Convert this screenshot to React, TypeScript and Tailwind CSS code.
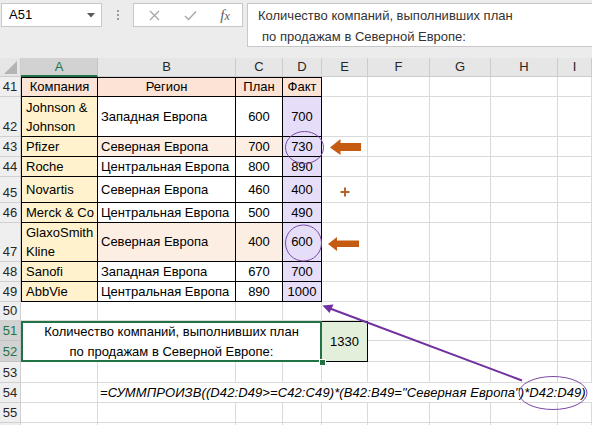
import React from "react";

const G = "border-r border-b border-[#dadada]";
const T = "border-r border-b border-black";

function RH({ n, sel }: { n?: number; sel?: boolean }) {
  return (
    <div
      className={
        sel
          ? "flex items-end justify-center bg-[#d2d2d2] text-[#217346] border-r border-b border-[#c4c4c4] leading-[19px]"
          : "flex items-end justify-center bg-[#efefef] text-[#262626] border-r border-b border-[#d0d0d0] leading-[19px]"
      }
    >
      {n}
    </div>
  );
}

function Empties({ count }: { count: number }) {
  return (
    <>
      {Array.from({ length: count }).map((_, i) => (
        <div key={i} className={G} />
      ))}
    </>
  );
}

type Row = {
  n: number;
  company: string;
  region: string;
  plan: number;
  fact: number;
  hl?: boolean;
  wrap?: boolean;
};

const rows: Row[] = [
  { n: 42, company: "Johnson & Johnson", region: "Западная Европа", plan: 600, fact: 700, wrap: true },
  { n: 43, company: "Pfizer", region: "Северная Европа", plan: 700, fact: 730, hl: true },
  { n: 44, company: "Roche", region: "Центральная Европа", plan: 800, fact: 890 },
  { n: 45, company: "Novartis", region: "Северная Европа", plan: 460, fact: 400 },
  { n: 46, company: "Merck & Co", region: "Центральная Европа", plan: 500, fact: 490 },
  { n: 47, company: "GlaxoSmith Kline", region: "Северная Европа", plan: 400, fact: 600, hl: true, wrap: true },
  { n: 48, company: "Sanofi", region: "Западная Европа", plan: 670, fact: 700 },
  { n: 49, company: "AbbVie", region: "Центральная Европа", plan: 890, fact: 1000 },
];

function ColHeader({ label, sel }: { label: string; sel?: boolean }) {
  return (
    <div
      className={
        sel
          ? "flex items-center justify-center bg-[#d2d2d2] text-[#217346] border-r border-[#c4c4c4] border-b-2 border-b-[#217346]"
          : "flex items-center justify-center bg-[#e6e6e6] text-[#262626] border-r border-b border-[#cccccc]"
      }
    >
      {label}
    </div>
  );
}

export default function App() {
  return (
    <div
      className="relative w-[592px] h-[425px] overflow-hidden bg-white text-[13px] text-black"
      style={{ fontFamily: '"Liberation Sans", Arial, sans-serif' }}
    >
      {/* Formula bar */}
      <div className="h-[58px] bg-[#ececec] pt-[3px] flex items-start">
        <div className="ml-px w-[101px] h-[24px] bg-white border border-[#c8c8c8] flex items-center pl-[7px] pr-[6px] justify-between">
          <span>A51</span>
          <svg width="8" height="5" viewBox="0 0 8 5">
            <path d="M0 0 L8 0 L4 4.5 Z" fill="#5a5a5a" />
          </svg>
        </div>
        <div className="w-[31px] h-[24px] flex items-center justify-center">
          <div className="flex flex-col gap-[2px]">
            <span className="block w-[2px] h-[2px] bg-[#9a9a9a]" />
            <span className="block w-[2px] h-[2px] bg-[#9a9a9a]" />
            <span className="block w-[2px] h-[2px] bg-[#9a9a9a]" />
          </div>
        </div>
        <div className="w-[110px] h-[24px] bg-white border border-[#c8c8c8] flex items-center">
          <div className="w-[38px] flex justify-center pl-[2px]">
            <svg width="11" height="11" viewBox="0 0 11 11">
              <path d="M1 1 L10 10 M10 1 L1 10" stroke="#a6a6a6" strokeWidth="1.3" />
            </svg>
          </div>
          <div className="w-[36px] flex justify-center">
            <svg width="13" height="11" viewBox="0 0 13 11">
              <path d="M1 6 L4.5 9.5 L12 1.5" stroke="#a6a6a6" strokeWidth="1.4" fill="none" />
            </svg>
          </div>
          <div
            className="w-[34px] flex justify-center italic text-[15px] text-[#5f5f5f]"
            style={{ fontFamily: '"Liberation Serif", "Times New Roman", serif' }}
          >
            <span>f</span>
            <span className="text-[12px] mt-[3px]">x</span>
          </div>
        </div>
        <div className="ml-[4px] flex-1 h-[44px] bg-white border border-r-0 border-[#c8c8c8] pl-[10px] pt-px leading-[21px] text-[#333]">
          <div>Количество компаний, выполнивших план</div>
          <div className="pl-[4px]">по продажам в Северной Европе:</div>
        </div>
      </div>

      {/* Sheet grid */}
      <div className="grid grid-cols-[21px_77px_138px_47px_39px_46px_62px_61px_67px_34px] grid-rows-[19px_20px_40px_20px_20px_26px_20px_39px_20px_20px_19px_20px_21px_21px_20px_20px_20px]">
        {/* column headers */}
        <div className="bg-[#e6e6e6] border-r border-b border-[#cccccc] flex items-end justify-end pr-[3px] pb-[2px]">
          <svg width="13" height="13" viewBox="0 0 13 13">
            <path d="M13 0 L13 13 L0 13 Z" fill="#b4b4b4" />
          </svg>
        </div>
        <ColHeader label="A" sel />
        <ColHeader label="B" />
        <ColHeader label="C" />
        <ColHeader label="D" />
        <ColHeader label="E" />
        <ColHeader label="F" />
        <ColHeader label="G" />
        <ColHeader label="H" />
        <ColHeader label="I" />

        {/* row 41 */}
        <RH n={41} />
        <div className={`${T} border-l border-t bg-[#fbe3d6] flex items-center justify-center`}>Компания</div>
        <div className={`${T} border-t bg-[#fbe3d6] flex items-center justify-center`}>Регион</div>
        <div className={`${T} border-t bg-[#fbe3d6] flex items-center justify-center`}>План</div>
        <div className={`${T} border-t bg-[#fbe3d6] flex items-center justify-center`}>Факт</div>
        <Empties count={5} />

        {rows.map((r) => (
          <React.Fragment key={r.n}>
            <RH n={r.n} />
            <div
              className={
                r.wrap
                  ? `${T} border-l bg-[#fff2cc] pl-[4px] pr-px flex items-center leading-[19px]`
                  : `${T} border-l bg-[#fff2cc] pl-[4px] flex items-center whitespace-nowrap`
              }
            >
              {r.company}
            </div>
            <div className={r.hl ? `${T} bg-[#fdeee4] pl-[3px] flex items-center whitespace-nowrap` : `${T} pl-[3px] flex items-center whitespace-nowrap`}>
              {r.region}
            </div>
            <div className={r.hl ? `${T} bg-[#fdeee4] flex items-center justify-center` : `${T} flex items-center justify-center`}>
              {r.plan}
            </div>
            <div className={`${T} bg-[#e6def8] flex items-center justify-center`}>{r.fact}</div>
            <Empties count={5} />
          </React.Fragment>
        ))}

        {/* row 50 */}
        <RH n={50} />
        <Empties count={9} />

        {/* rows 51-52 */}
        <RH n={51} sel />
        <div className="col-span-4 row-span-2 border-2 border-[#217346] flex flex-col items-center justify-center leading-[20px]">
          <div>Количество компаний, выполнивших план</div>
          <div>по продажам в Северной Европе:</div>
        </div>
        <div className="row-span-2 bg-[#e2efda] border-r border-b border-t border-black flex items-center justify-center">
          1330
        </div>
        <Empties count={4} />
        <RH n={52} sel />
        <Empties count={4} />

        {/* row 53 */}
        <RH n={53} />
        <Empties count={9} />

        {/* row 54 */}
        <RH n={54} />
        <div className={G} />
        <div className="col-span-8 border-b border-[#dadada] flex items-center pl-[2px] whitespace-nowrap italic text-[13px] tracking-[0.1px]">
          =СУММПРОИЗВ((D42:D49&gt;=C42:C49)*(B42:B49="Северная Европа")*D42:D49)
        </div>

        {/* row 55 */}
        <RH n={55} />
        <Empties count={9} />

        {/* row 56 (cut off) */}
        <RH />
        <Empties count={9} />
      </div>

      {/* Annotations overlay */}
      <svg className="absolute inset-0 pointer-events-none" width="592" height="425" viewBox="0 0 592 425">
        <ellipse cx="304.5" cy="147.5" rx="19" ry="16" fill="none" stroke="#7a4aa6" strokeWidth="1" />
        <ellipse cx="303.5" cy="243" rx="18" ry="18" fill="none" stroke="#7a4aa6" strokeWidth="1" />
        <path d="M330 147.5 L340.5 139 L340.5 143 L361 143 L361 151 L340.5 151 L340.5 155 Z" fill="#c55a11" />
        <path d="M328 244 L337 237 L337 240.5 L359 240.5 L359 247 L337 247 L337 251 Z" fill="#c55a11" />
        <path d="M345 187.5 L345 196.5 M340.5 192 L349.5 192" stroke="#b5652b" strokeWidth="2" />
        <line x1="522" y1="380.5" x2="330" y2="308.5" stroke="#7030a0" strokeWidth="2" />
        <path d="M322.5 305.5 L333.5 304.5 L329.5 313 Z" fill="#7030a0" />
        <ellipse cx="553" cy="393" rx="34" ry="16.5" fill="none" stroke="#7a4aa6" strokeWidth="1" />
        <rect x="319.5" y="359.5" width="6" height="6" fill="#217346" stroke="#ffffff" strokeWidth="1" />
      </svg>
    </div>
  );
}
